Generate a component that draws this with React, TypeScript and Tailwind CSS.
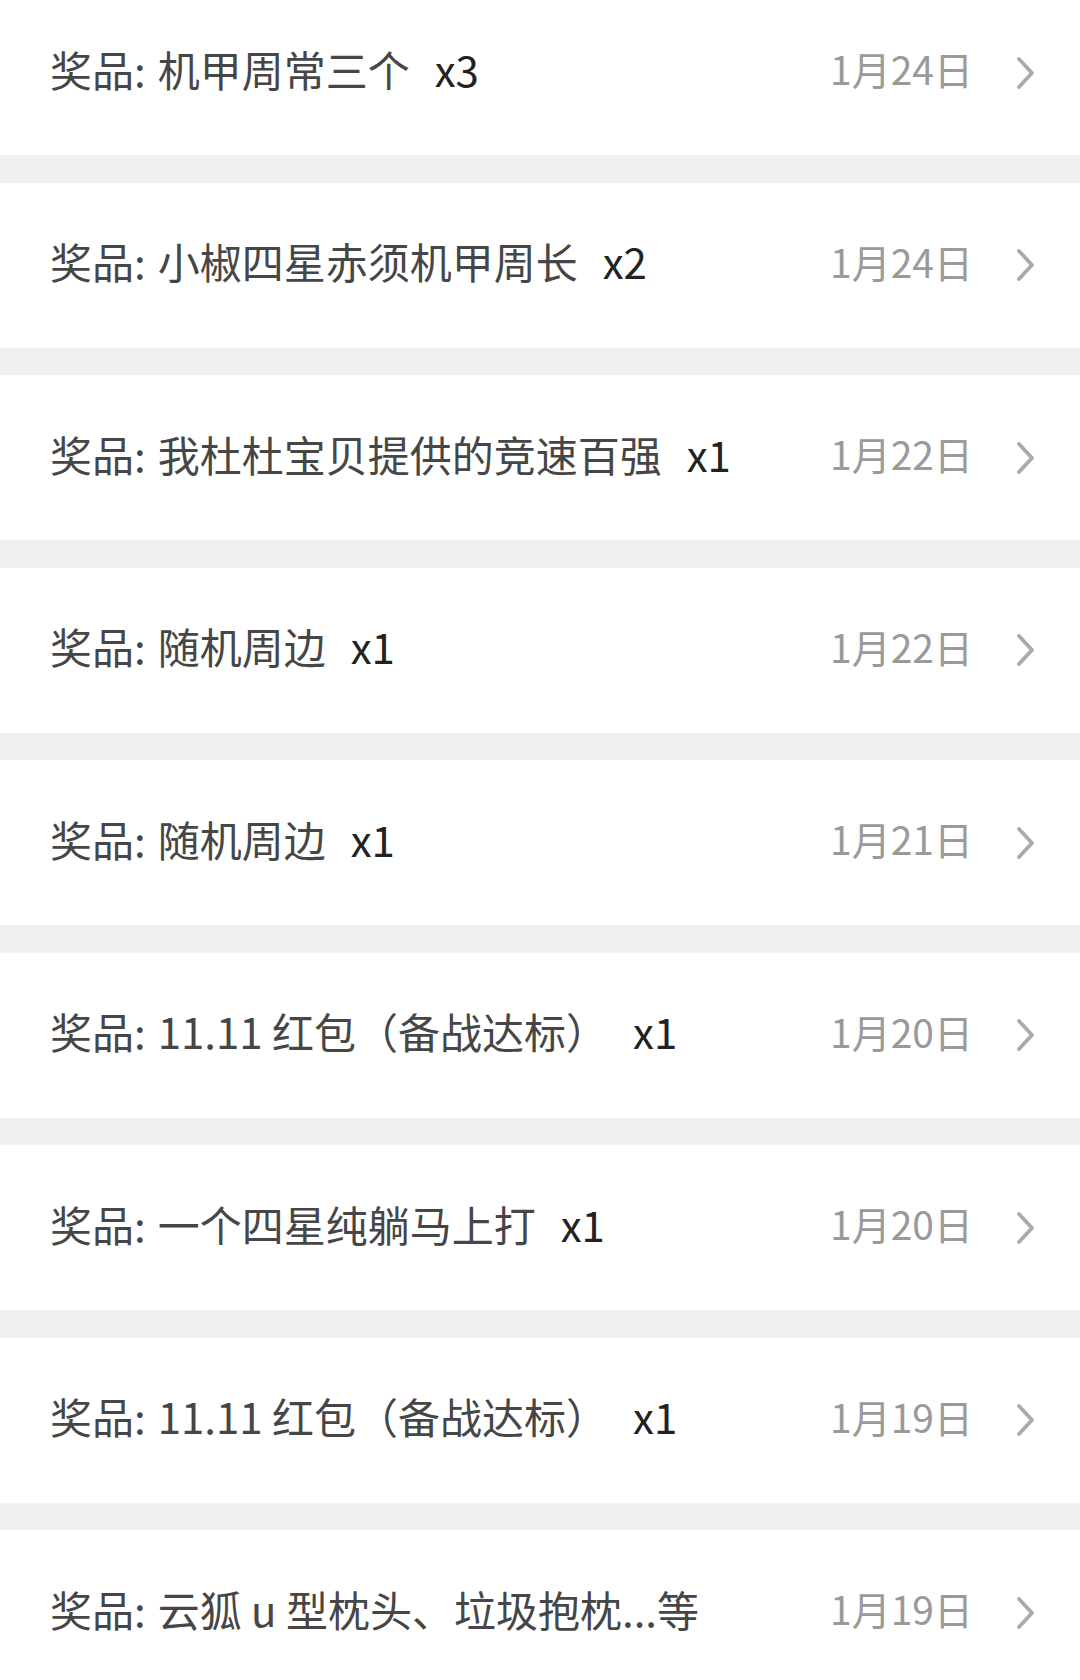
import React from "react";

const rows = [
  { name: "机甲周常三个", count: "x3", date: "1月24日" },
  { name: "小椒四星赤须机甲周长", count: "x2", date: "1月24日" },
  { name: "我杜杜宝贝提供的竞速百强", count: "x1", date: "1月22日" },
  { name: "随机周边", count: "x1", date: "1月22日" },
  { name: "随机周边", count: "x1", date: "1月21日" },
  { name: "11.11 红包（备战达标）", count: "x1", date: "1月20日" },
  { name: "一个四星纯躺马上打", count: "x1", date: "1月20日" },
  { name: "11.11 红包（备战达标）", count: "x1", date: "1月19日" },
  { name: "云狐 u 型枕头、垃圾抱枕...等", count: "", date: "1月19日" },
];

function Chevron() {
  return (
    <svg width="22" height="34" viewBox="0 0 22 34" className="ml-[42px] shrink-0">
      <path d="M4 3 L17 17 L4 31" fill="none" stroke="#aaaaaa" strokeWidth="3.8" strokeLinecap="round" strokeLinejoin="round" />
    </svg>
  );
}

export default function App() {
  return (
    <div
      className="w-[1080px] h-[1680px] overflow-hidden bg-[#f0f0f0]"
      style={{ fontFamily: '"Noto Sans CJK SC", "Noto Sans", sans-serif' }}
    >
      <div className="-mt-[10px] flex flex-col gap-[27.5px]">
        {rows.map((r, i) => (
          <div key={i} className="h-[165px] bg-white flex items-center pl-[50px] pr-[43px]">
            <div className="flex-1 flex items-center text-[42px] leading-none text-[#464646] whitespace-nowrap pb-[8px]">
              <span>奖品:</span>
              <span className="ml-[12px]">{r.name}</span>
              {r.count && <span className="ml-[25px] text-[#222222]">{r.count}</span>}
            </div>
            <span className="text-[39px] leading-none text-[#9a9a9a] whitespace-nowrap pb-[8px]">{r.date}</span>
            <Chevron />
          </div>
        ))}
      </div>
    </div>
  );
}
